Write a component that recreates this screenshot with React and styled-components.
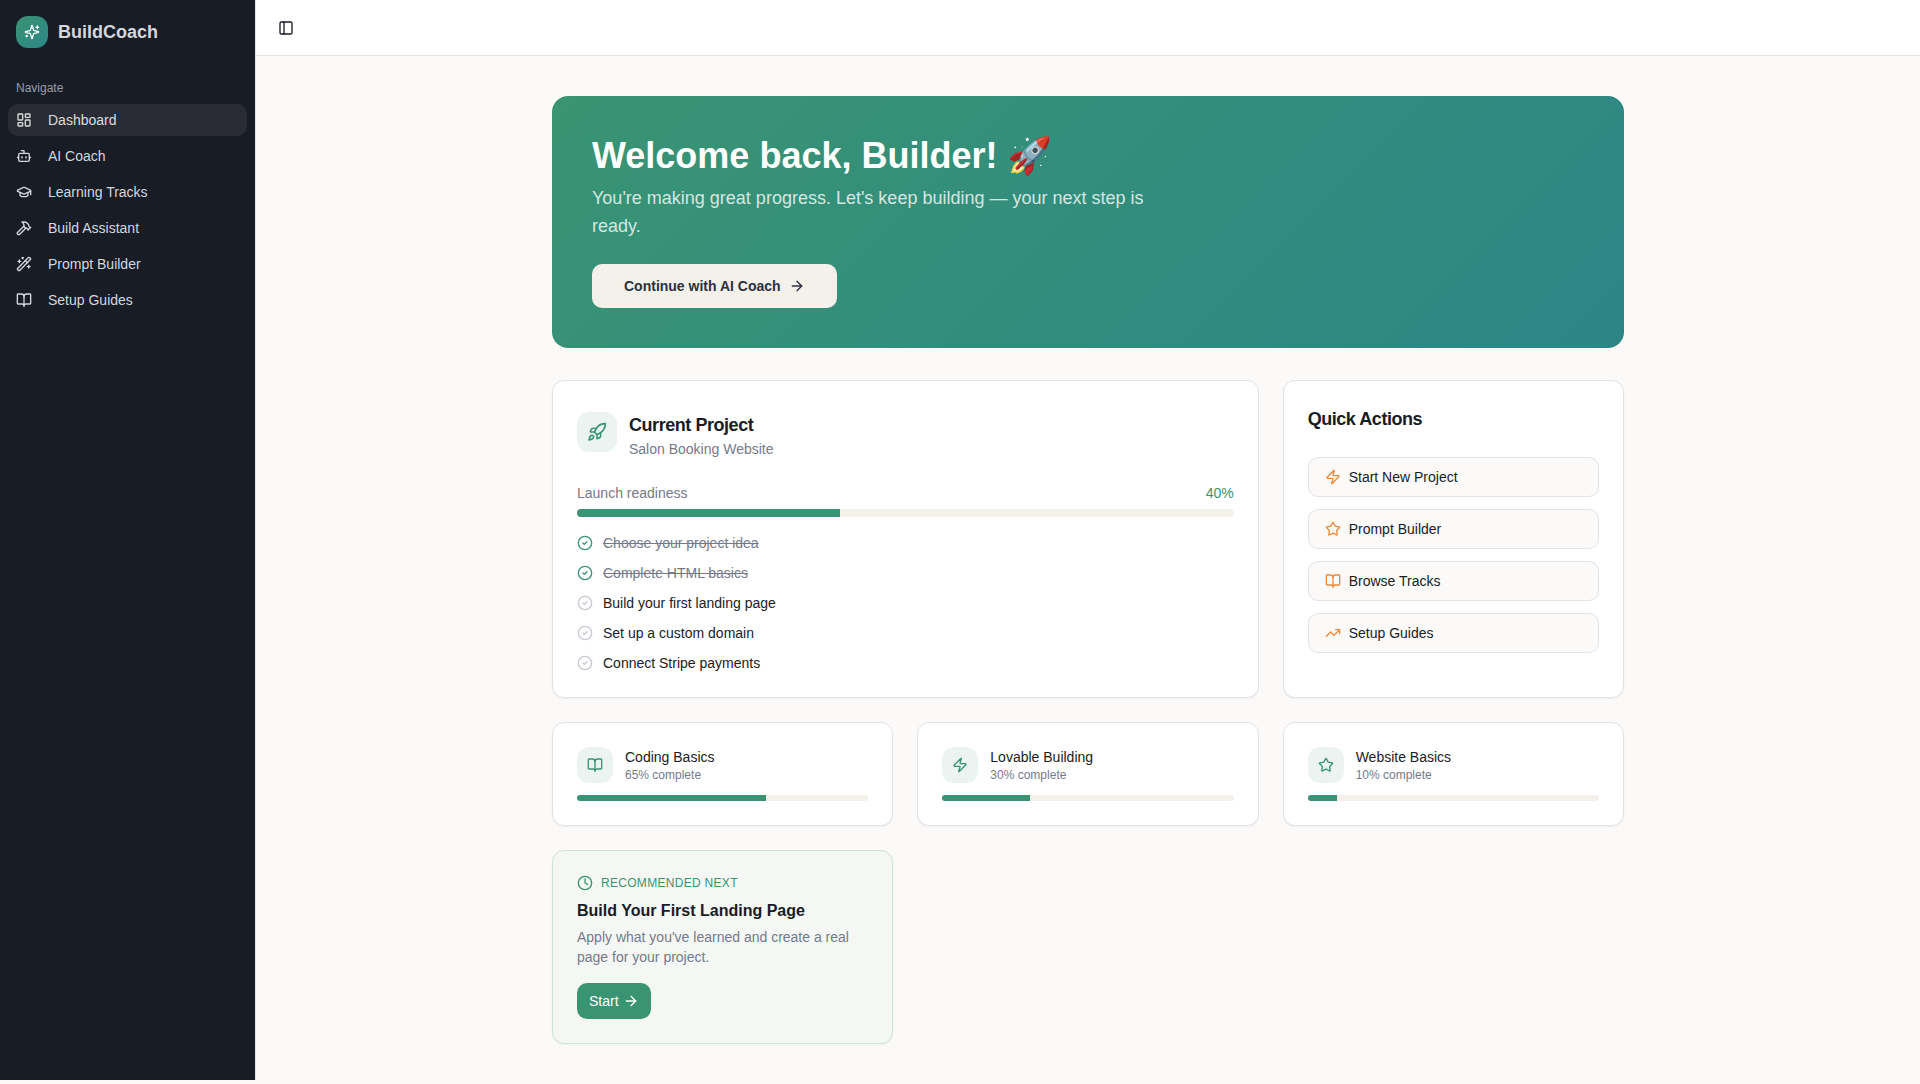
import React from "react";
import styled, { createGlobalStyle } from "styled-components";
import {
  ArrowRight,
  BookOpen,
  Bot,
  CircleCheck,
  Clock,
  GraduationCap,
  Hammer,
  LayoutDashboard,
  PanelLeft,
  Rocket,
  Star,
  TrendingUp,
  WandSparkles,
  Zap,
} from "lucide-react";

const GlobalStyle = createGlobalStyle`
  *, *::before, *::after {
    box-sizing: border-box;
  }
  body {
    margin: 0;
    background-color: #fbfaf9;
    color: #181c25;
    font-family: "Liberation Sans", Arial, sans-serif;
    font-size: 16px;
    line-height: 24px;
    -webkit-font-smoothing: antialiased;
  }
  h1, h2, h3, p {
    margin: 0;
  }
  button {
    font-family: inherit;
    cursor: pointer;
  }
  svg {
    display: block;
    flex-shrink: 0;
  }
`;

const Layout = styled.div`
  display: flex;
  align-items: flex-start;
  min-height: 1084px;
`;

const Sidebar = styled.aside`
  width: 256px;
  height: 1080px;
  flex-shrink: 0;
  background-color: #181c25;
  border-right: 1px solid #e2e3e9;
  color: #d5d7dd;
`;

const Brand = styled.div`
  display: flex;
  align-items: center;
  gap: 10px;
  height: 64px;
  padding: 0 16px;
  font-size: 18px;
  font-weight: 700;
  line-height: 28px;
`;

const BrandMark = styled.div`
  display: flex;
  align-items: center;
  justify-content: center;
  width: 32px;
  height: 32px;
  border-radius: 12px;
  background-image: linear-gradient(135deg, #399473, #2d8686);
  color: white;
`;

const NavGroup = styled.nav`
  padding: 8px;
`;

const NavLabel = styled.div`
  height: 32px;
  padding: 0 8px;
  font-size: 12px;
  line-height: 32px;
  color: #9b9da5;
`;

const NavList = styled.div`
  display: flex;
  flex-direction: column;
  gap: 4px;
`;

const NavItem = styled.a`
  display: flex;
  align-items: center;
  gap: 16px;
  height: 32px;
  padding: 0 8px;
  border-radius: 10px;
  font-size: 14px;
  line-height: 20px;
  color: ${(props) => (props.$active ? "#dddcd9" : "inherit")};
  background-color: ${(props) => (props.$active ? "#292c35" : "transparent")};
`;

const Content = styled.div`
  flex: 1;
  min-width: 0;
`;

const Header = styled.header`
  display: flex;
  align-items: center;
  height: 56px;
  padding: 0 16px;
  background-color: white;
  border-bottom: 1px solid #e2e3e9;
`;

const SidebarToggle = styled.button`
  display: flex;
  align-items: center;
  justify-content: center;
  width: 28px;
  height: 28px;
  padding: 0;
  border: none;
  background: none;
  color: #181c25;
`;

const Main = styled.main`
  max-width: 1152px;
  margin: 0 auto;
  padding: 40px;
`;

const Hero = styled.section`
  padding: 40px;
  margin-bottom: 32px;
  border-radius: 16px;
  background-image: linear-gradient(135deg, #399473, #2d8686);
  color: white;
  h1 {
    font-size: 36px;
    font-weight: 700;
    line-height: 40px;
    margin-bottom: 8px;
  }
  p {
    max-width: 576px;
    margin-bottom: 24px;
    font-size: 18px;
    line-height: 28px;
    color: rgba(255, 255, 255, 0.8);
  }
`;

const HeroButton = styled.button`
  display: inline-flex;
  align-items: center;
  gap: 8px;
  height: 44px;
  padding: 0 32px;
  border: none;
  border-radius: 10px;
  background-color: #f4f1eb;
  color: #2b3040;
  font-size: 14px;
  font-weight: 600;
  line-height: 20px;
  vertical-align: top;
`;

const Grid = styled.div`
  display: grid;
  grid-template-columns: repeat(3, minmax(0, 1fr));
  gap: 24px;
`;

const Card = styled.section`
  grid-column: span ${(props) => props.$span || 1};
  padding: 24px;
  border: 1px solid ${(props) => (props.$highlight ? "#cde4da" : "#e2e3e9")};
  border-radius: 12px;
  background-color: ${(props) => (props.$highlight ? "#f5f7f4" : "white")};
  box-shadow: 0 1px 2px rgba(0, 0, 0, 0.05);
`;

const CardTitle = styled.h3`
  font-size: 18px;
  font-weight: 600;
  line-height: 28px;
  letter-spacing: -0.45px;
`;

const ProjectHeader = styled.div`
  display: flex;
  gap: 12px;
  padding-top: 6px;
  margin-bottom: 24px;
`;

const IconTile = styled.div`
  display: flex;
  align-items: center;
  justify-content: center;
  flex-shrink: 0;
  width: ${(props) => props.$size}px;
  height: ${(props) => props.$size}px;
  margin-top: ${(props) => props.$offset || 0}px;
  border-radius: 12px;
  background-color: #ebf4f1;
  color: #399473;
`;

const Muted = styled.p`
  font-size: ${(props) => (props.$small ? 12 : 14)}px;
  line-height: ${(props) => (props.$small ? 16 : 20)}px;
  color: #747a8c;
`;

const ReadinessRow = styled.div`
  display: flex;
  justify-content: space-between;
  margin-bottom: 6px;
  font-size: 14px;
  line-height: 20px;
  color: #399473;
`;

const Track = styled.div`
  height: ${(props) => props.$height}px;
  border-radius: 999px;
  background-color: #f4f1eb;
  overflow: hidden;
`;

const Fill = styled.div`
  height: 100%;
  background-color: #399473;
`;

const TaskList = styled.div`
  display: flex;
  flex-direction: column;
  gap: 10px;
  margin-top: 16px;
`;

const Task = styled.div`
  display: flex;
  align-items: center;
  gap: 10px;
  font-size: 14px;
  line-height: 20px;
  color: ${(props) => (props.$done ? "#747a8c" : "#181c25")};
  text-decoration: ${(props) => (props.$done ? "line-through" : "none")};
  svg {
    color: ${(props) => (props.$done ? "#399473" : "#c7cad1")};
  }
`;

const ActionList = styled.div`
  display: flex;
  flex-direction: column;
  gap: 12px;
  margin-top: 24px;
`;

const ActionButton = styled.button`
  display: flex;
  align-items: center;
  gap: 8px;
  height: 40px;
  padding: 0 16px;
  border: 1px solid #e2e3e9;
  border-radius: 10px;
  background-color: #fbfaf9;
  color: #181c25;
  font-size: 14px;
  line-height: 20px;
  svg {
    color: #ec8b3c;
  }
`;

const TrackHeader = styled.div`
  display: flex;
  align-items: center;
  gap: 12px;
  margin-bottom: 12px;
`;

const TrackName = styled.p`
  font-size: 14px;
  line-height: 20px;
`;

const Eyebrow = styled.div`
  display: flex;
  align-items: center;
  gap: 8px;
  margin-bottom: 8px;
  font-size: 12px;
  line-height: 16px;
  letter-spacing: 0.3px;
  text-transform: uppercase;
  color: #399473;
`;

const NextTitle = styled.h3`
  font-size: 16px;
  font-weight: 600;
  line-height: 24px;
  margin-bottom: 4px;
`;

const StartButton = styled.button`
  display: inline-flex;
  align-items: center;
  gap: 4px;
  height: 36px;
  margin-top: 16px;
  padding: 0 12px;
  border: none;
  border-radius: 10px;
  background-color: #399473;
  color: white;
  font-size: 14px;
  line-height: 20px;
  vertical-align: top;
`;

const navItems = [
  { title: "Dashboard", icon: LayoutDashboard },
  { title: "AI Coach", icon: Bot },
  { title: "Learning Tracks", icon: GraduationCap },
  { title: "Build Assistant", icon: Hammer },
  { title: "Prompt Builder", icon: WandSparkles },
  { title: "Setup Guides", icon: BookOpen },
];

const tasks = [
  { label: "Choose your project idea", done: true },
  { label: "Complete HTML basics", done: true },
  { label: "Build your first landing page", done: false },
  { label: "Set up a custom domain", done: false },
  { label: "Connect Stripe payments", done: false },
];

const actions = [
  { label: "Start New Project", icon: Zap },
  { label: "Prompt Builder", icon: Star },
  { label: "Browse Tracks", icon: BookOpen },
  { label: "Setup Guides", icon: TrendingUp },
];

const tracks = [
  { title: "Coding Basics", progress: 65, icon: BookOpen },
  { title: "Lovable Building", progress: 30, icon: Zap },
  { title: "Website Basics", progress: 10, icon: Star },
];

// four-point sparkle with a small plus and two dots
function SparkleIcon() {
  return (
    <svg
      width="16"
      height="16"
      viewBox="0 0 24 24"
      fill="none"
      stroke="currentColor"
      strokeWidth="2"
      strokeLinecap="round"
      strokeLinejoin="round"
    >
      <path d="M9.937 15.5A2 2 0 0 0 8.5 14.063l-6.135-1.582a.5.5 0 0 1 0-.962L8.5 9.936A2 2 0 0 0 9.937 8.5l1.582-6.135a.5.5 0 0 1 .963 0L14.063 8.5A2 2 0 0 0 15.5 9.937l6.135 1.581a.5.5 0 0 1 0 .964L15.5 14.063a2 2 0 0 0-1.437 1.437l-1.582 6.135a.5.5 0 0 1-.963 0z" />
      <path d="M20 3v4" />
      <path d="M22 5h-4" />
      <path d="M4 17v2" />
      <path d="M5 18H3" />
    </svg>
  );
}

function ProgressBar({ value, height }) {
  return (
    <Track $height={height}>
      <Fill style={{ width: `${value}%` }} />
    </Track>
  );
}

function AppSidebar() {
  return (
    <Sidebar>
      <Brand>
        <BrandMark>
          <SparkleIcon />
        </BrandMark>
        BuildCoach
      </Brand>
      <NavGroup>
        <NavLabel>Navigate</NavLabel>
        <NavList>
          {navItems.map((item, i) => (
            <NavItem key={item.title} $active={i === 0}>
              <item.icon size={16} />
              {item.title}
            </NavItem>
          ))}
        </NavList>
      </NavGroup>
    </Sidebar>
  );
}

function CurrentProject() {
  return (
    <Card $span={2}>
      <ProjectHeader>
        <IconTile $size={40} $offset={1}>
          <Rocket size={20} />
        </IconTile>
        <div>
          <CardTitle>Current Project</CardTitle>
          <Muted>Salon Booking Website</Muted>
        </div>
      </ProjectHeader>
      <ReadinessRow>
        <Muted>Launch readiness</Muted>
        <span>40%</span>
      </ReadinessRow>
      <ProgressBar value={40} height={8} />
      <TaskList>
        {tasks.map((task) => (
          <Task key={task.label} $done={task.done}>
            <CircleCheck size={16} />
            {task.label}
          </Task>
        ))}
      </TaskList>
    </Card>
  );
}

function QuickActions() {
  return (
    <Card>
      <CardTitle>Quick Actions</CardTitle>
      <ActionList>
        {actions.map((action) => (
          <ActionButton key={action.label}>
            <action.icon size={16} />
            {action.label}
          </ActionButton>
        ))}
      </ActionList>
    </Card>
  );
}

function TrackCard({ track }) {
  return (
    <Card>
      <TrackHeader>
        <IconTile $size={36}>
          <track.icon size={16} />
        </IconTile>
        <div>
          <TrackName>{track.title}</TrackName>
          <Muted $small>{track.progress}% complete</Muted>
        </div>
      </TrackHeader>
      <ProgressBar value={track.progress} height={6} />
    </Card>
  );
}

export default function App() {
  return (
    <Layout>
      <GlobalStyle />
      <AppSidebar />
      <Content>
        <Header>
          <SidebarToggle>
            <PanelLeft size={16} />
          </SidebarToggle>
        </Header>
        <Main>
          <Hero>
            <h1>Welcome back, Builder! 🚀</h1>
            <p>
              You're making great progress. Let's keep building — your next step
              is ready.
            </p>
            <HeroButton>
              Continue with AI Coach
              <ArrowRight size={16} />
            </HeroButton>
          </Hero>
          <Grid>
            <CurrentProject />
            <QuickActions />
            {tracks.map((track) => (
              <TrackCard key={track.title} track={track} />
            ))}
            <Card $highlight>
              <Eyebrow>
                <Clock size={16} />
                Recommended Next
              </Eyebrow>
              <NextTitle>Build Your First Landing Page</NextTitle>
              <Muted>
                Apply what you've learned and create a real page for your
                project.
              </Muted>
              <StartButton>
                Start
                <ArrowRight size={16} />
              </StartButton>
            </Card>
          </Grid>
        </Main>
      </Content>
    </Layout>
  );
}
